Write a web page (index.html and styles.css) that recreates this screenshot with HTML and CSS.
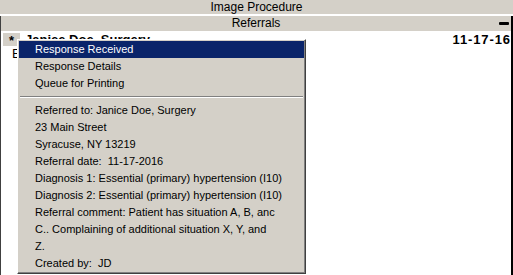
FILE: index.html
```html
<!DOCTYPE html>
<html lang="en">
<head>
  <meta charset="UTF-8" />
  <title>Referrals</title>
  <link rel="stylesheet" href="styles.css">
</head>
<body>

  <div class="panel">
    <div class="bar bar-top">Image Procedure</div>
    <div class="list">
      <div class="bar bar-sub">
        <span class="bar-title">Referrals</span>
        <span class="collapse"></span>
      </div>
      <div class="row">
        <span class="star">*</span>
        <span class="name">Janice Doe, Surgery</span>
        <span class="date">11-17-16</span>
      </div>
      <div class="row-detail">Essential</div>
    </div>
  </div>

  <div class="menu">
    <div class="item selected">Response Received</div>
    <div class="item">Response Details</div>
    <div class="item">Queue for Printing</div>
    <div class="sep"></div>
    <div class="item">Referred to: Janice Doe, Surgery</div>
    <div class="item">23 Main Street</div>
    <div class="item">Syracuse, NY 13219</div>
    <div class="item">Referral date:&nbsp; 11-17-2016</div>
    <div class="item">Diagnosis 1: Essential (primary) hypertension (I10)</div>
    <div class="item">Diagnosis 2: Essential (primary) hypertension (I10)</div>
    <div class="item">Referral comment: Patient has situation A, B, anc</div>
    <div class="item">C.. Complaining of additional situation X, Y, and</div>
    <div class="item">Z.</div>
    <div class="item">Created by:&nbsp; JD</div>
  </div>

</body>
</html>
```

FILE: styles.css
```css
body {
  margin: 0;
  font-family: "Liberation Sans", Arial, sans-serif;
  background: #fff;
  width: 513px;
  height: 275px;
  overflow: hidden;
}

.panel {
  height: 275px;
}

.bar {
  background: #d4d0c8;
  color: #000;
  font-size: 12px;
  text-align: center;
}

.bar-top {
  height: 14px;
  line-height: 14px;
  border-bottom: 2px solid #fff;
}

.list {
  height: 259px;
  border-left: 1px solid #404040;
  border-right: 2px solid #000;
  box-sizing: border-box;
}

.bar-sub {
  height: 15px;
  line-height: 15px;
  display: flex;
  justify-content: center;
  position: relative;
}

.collapse {
  position: absolute;
  right: 2px;
  top: 6px;
  width: 10px;
  height: 3px;
  background: #000;
  border-radius: 1px;
}

.row {
  display: flex;
  align-items: center;
  height: 14px;
  margin-top: 1px;
  font-size: 13px;
  font-weight: bold;
}

.star {
  width: 17px;
  height: 13px;
  margin-left: 2px;
  background: #d4d0c8;
  text-align: center;
  line-height: 15px;
}

.name {
  margin-left: 5px;
  flex: 1;
}

.date {
  letter-spacing: 0.9px;
}

.row-detail {
  font-size: 13px;
  padding-left: 11px;
}

.menu {
  position: absolute;
  left: 17px;
  top: 39px;
  width: 285px;
  padding: 1px;
  background: #d4d0c8;
  border: 1px solid;
  border-color: #fff #404040 #404040 #fff;
  box-shadow: inset -1px -1px 0 #808080;
  font-size: 11px;
}

.menu .item {
  height: 17px;
  line-height: 17px;
  padding-left: 16px;
  color: #000;
  white-space: nowrap;
}

.menu .item.selected {
  background: #0a246a;
  color: #fff;
}

.menu .sep {
  margin: 4px 1px;
  border-top: 1px solid #808080;
  border-bottom: 1px solid #fff;
}
```
